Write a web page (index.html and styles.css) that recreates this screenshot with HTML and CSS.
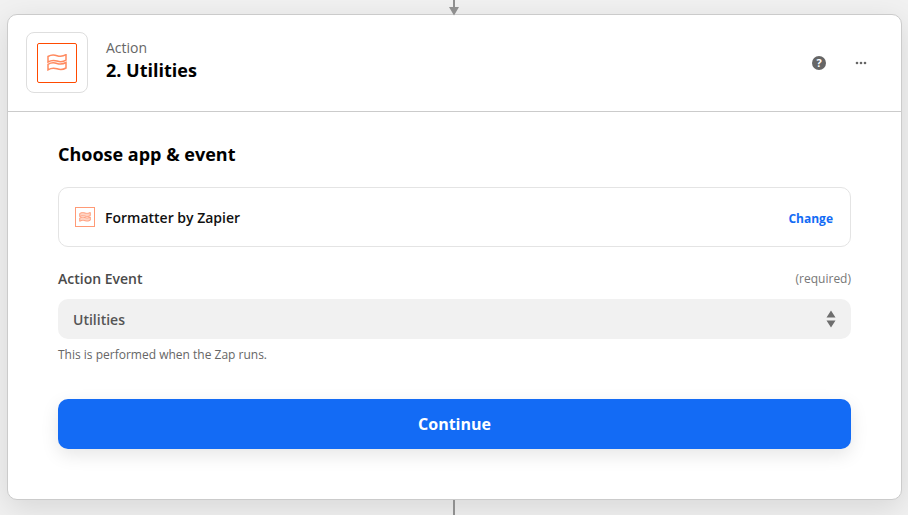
FILE: index.html
```html
<!DOCTYPE html>
<html lang="en">
<head>
<meta charset="utf-8">
<title>Action - Utilities</title>
<link rel="stylesheet" href="styles.css">
</head>
<body>
<div class="connector connector-top">
  <svg width="10" height="16" viewBox="0 0 10 16"><path class="conn-fill" d="M4 0h2v7h4l-5 8.500L0 7h4z"/></svg>
</div>
<main class="card">
  <header class="card-head">
    <div class="app-tile">
      <div class="app-square">
        <svg class="waves" width="20" height="17" viewBox="0 0 20 17"><path d="M1 2.500c3-1.800 6-1.800 9-.8s6 .8 9-1v5.500c-3 1.800-6 1.800-9 .8s-6-.8-9 1z"/><path d="M1 10.300c3-1.800 6-1.800 9-.8s6 .8 9-1v5.500c-3 1.800-6 1.800-9 .8s-6-.8-9 1z"/></svg>
      </div>
    </div>
    <div class="head-text">
      <div class="head-kind">Action</div>
      <div class="head-title">2. Utilities</div>
    </div>
    <div class="head-tools">
      <svg class="help" width="14" height="14" viewBox="0 0 14 14"><circle cx="7" cy="7" r="7"/><text x="7" y="11" text-anchor="middle">?</text></svg>
      <svg class="more" width="12" height="4" viewBox="0 0 12 4"><circle cx="2" cy="2" r="1.300"/><circle cx="6" cy="2" r="1.300"/><circle cx="10" cy="2" r="1.300"/></svg>
    </div>
  </header>
  <section class="card-body">
    <h2 class="section-title">Choose app &amp; event</h2>
    <div class="app-row">
      <div class="app-mini">
        <svg class="waves-mini" width="12" height="10" viewBox="0 0 20 17"><path d="M1 2.500c3-1.800 6-1.800 9-.8s6 .8 9-1v5.500c-3 1.800-6 1.800-9 .8s-6-.8-9 1z"/><path d="M1 10.300c3-1.800 6-1.800 9-.8s6 .8 9-1v5.500c-3 1.800-6 1.800-9 .8s-6-.8-9 1z"/></svg>
      </div>
      <span class="app-name">Formatter by Zapier</span>
      <span class="app-change">Change</span>
    </div>
    <div class="field-head">
      <span class="field-label">Action Event</span>
      <span class="field-req">(required)</span>
    </div>
    <div class="select">
      <span>Utilities</span>
      <svg width="10" height="18" viewBox="0 0 10 18"><path d="M5 .5l4.500 7H.5zM5 17.500l4.500-7H.5z"/></svg>
    </div>
    <p class="field-help">This is performed when the Zap runs.</p>
    <button class="continue" type="button">Continue</button>
  </section>
</main>
<div class="connector connector-bottom"></div>
</body>
</html>
```
FILE: styles.css
```css
* { box-sizing: border-box; }
html, body { margin: 0; height: 515px; overflow: hidden; }
body {
  position: relative;
  padding: 14px 6px 15px 7px;
  background: #f1f1f1;
  font-family: "Open Sans", sans-serif;
  color: #2d2e2e;
}
.connector { position: absolute; left: 449px; }
.connector-top { top: 0; height: 16px; line-height: 0; }
.conn-fill { fill: #8f8f8f; }
.connector-bottom {
  left: 453px; top: 500px; width: 2px; height: 15px; background: #8f8f8f;
}
.card {
  height: 486px;
  background: #fff;
  border: 1px solid #cbcbcb;
  border-radius: 10px;
  box-shadow: 0 8px 30px rgba(0, 0, 0, .11);
}
.card-head {
  height: 97px;
  display: flex;
  align-items: center;
  padding: 0 34px 0 18px;
  border-bottom: 1px solid #cbcbcb;
}
.app-tile {
  width: 62px; height: 61px;
  margin-top: -1px;
  display: flex; align-items: center; justify-content: center;
  border: 1px solid #dedede;
  border-radius: 8px;
  background: #fff;
}
.app-square {
  width: 40px; height: 40px;
  display: flex; align-items: center; justify-content: center;
  border: 1.500px solid #ff4a00;
  border-radius: 2px;
}
.waves path { fill: none; stroke: #ff8a5f; stroke-width: 1.500; }
.head-text { margin: -7px 0 0 18px; flex: 1; }
.head-kind { font-size: 14px; line-height: 20px; color: #666; }
.head-title { font-size: 18px; line-height: 24px; font-weight: 700; color: #000; }
.head-tools { display: flex; align-items: center; gap: 29px; }
.help circle { fill: #666; }
.help text { fill: #fff; font-size: 11px; font-weight: 700; font-family: "Open Sans", sans-serif; }
.more circle { fill: #666; }
.card-body { padding: 0 50px; }
.section-title {
  margin: 30px 0 0;
  font-size: 18px; line-height: 24px; font-weight: 700; color: #000;
}
.app-row {
  height: 60px;
  margin-top: 21px;
  display: flex; align-items: center;
  padding: 0 17px 0 16px;
  border: 1px solid #e4e4e4;
  border-radius: 10px;
}
.app-mini {
  width: 20px; height: 20px;
  display: flex; align-items: center; justify-content: center;
  border: 1px solid #ff9a76;
  background: #fff;
  flex: none;
}
.waves-mini path { fill: #ffd3c2; stroke: #ff9470; stroke-width: 1.500; }
.app-name { margin-left: 10px; flex: 1; font-size: 14px; font-weight: 600; color: #111; }
.app-change { font-size: 12px; font-weight: 700; color: #136bf5; margin-top: 3px; }
.field-head {
  margin-top: 21px;
  height: 20px;
  display: flex; justify-content: space-between; align-items: center;
}
.field-label { font-size: 14px; font-weight: 600; color: #4a4a4a; }
.field-req { font-size: 12px; color: #777; }
.select {
  height: 40px;
  margin-top: 11px;
  padding: 0 15px;
  display: flex; align-items: center; justify-content: space-between;
  background: #f1f1f1;
  border-radius: 10px;
  font-size: 14px; font-weight: 600; color: #555;
}
.select svg { fill: #6e6e6e; }
.field-help { margin: 8px 0 0; font-size: 12px; line-height: 16px; color: #666; }
.continue {
  display: block;
  width: 100%;
  height: 50px;
  margin-top: 36px;
  border: 0;
  border-radius: 10px;
  background: #136bf5;
  color: #fff;
  font-family: inherit;
  font-size: 16px;
  font-weight: 700;
  box-shadow: 0 6px 18px rgba(0, 0, 0, .1);
}
```
